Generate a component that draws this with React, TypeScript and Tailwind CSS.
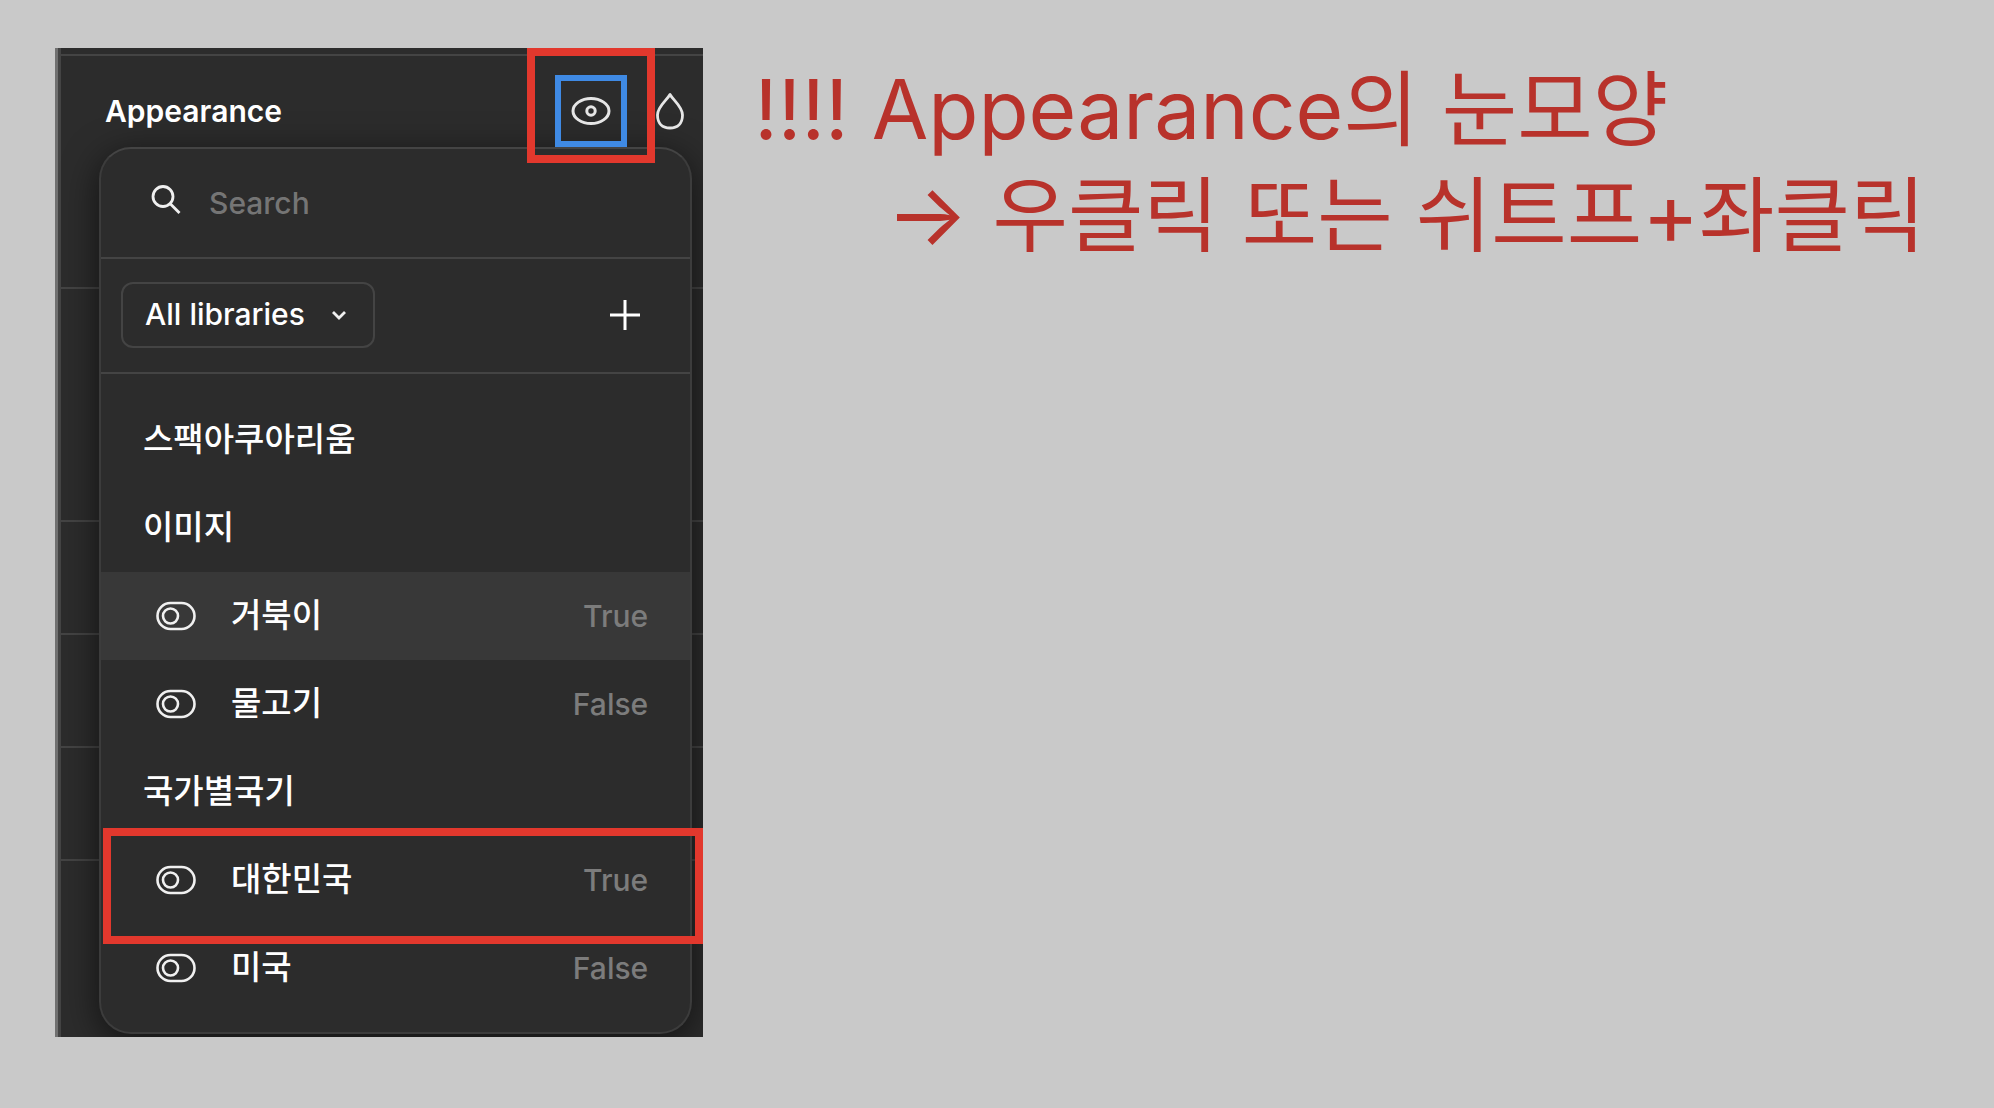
import React, { useState } from 'react';

interface Variable {
    id: number;
    name: string;
    value: string;
    marked?: boolean;
}

interface VariableGroup {
    title: string;
    variables: Variable[];
}

const groups: VariableGroup[] = [
    { title: '스팩아쿠아리움', variables: [] },
    {
        title: '이미지',
        variables: [
            { id: 1, name: '거북이', value: 'True' },
            { id: 2, name: '물고기', value: 'False' },
        ],
    },
    {
        title: '국가별국기',
        variables: [
            { id: 3, name: '대한민국', value: 'True', marked: true },
            { id: 4, name: '미국', value: 'False' },
        ],
    },
];

const EyeIcon = () => (
    <svg viewBox="0 0 40 30" className="w-10 h-[30px]" fill="none" stroke="#e6e6e6" strokeWidth="3" aria-hidden="true">
        <path d="M2 15C2 8 10.500 2.500 20 2.500S38 8 38 15S29.500 27.500 20 27.500S2 22 2 15Z" />
        <circle cx="20" cy="15" r="4.200" />
    </svg>
);

const DropIcon = () => (
    <svg viewBox="0 0 28 38" className="w-7 h-[38px]" fill="none" stroke="#e6e6e6" strokeWidth="2.800" strokeLinejoin="round" aria-hidden="true">
        <path d="M14 2.500C11 8 1.500 14.500 1.500 23C1.500 31.500 6.500 36 14 36S26.500 31.500 26.500 23C26.500 14.500 17 8 14 2.500Z" />
    </svg>
);

const SearchIcon = () => (
    <svg viewBox="0 0 30 30" className="w-[30px] h-[30px] mb-2" fill="none" stroke="#f0f0f0" strokeWidth="2.800" aria-hidden="true">
        <circle cx="12" cy="12.500" r="10" />
        <path d="M19 19.500L28.500 29" />
    </svg>
);

const ToggleIcon = () => (
    <svg viewBox="0 0 40 30" className="w-10 h-[30px]" fill="none" stroke="#f0f0f0" strokeWidth="2.600" aria-hidden="true">
        <rect x="1.500" y="2" width="37" height="26" rx="13" />
        <circle cx="14.500" cy="15" r="7.500" />
    </svg>
);

const VariableRow: React.FC<{ variable: Variable; active: boolean; onSelect: (id: number) => void }> = ({ variable, active, onSelect }) => {
    return (
        <li className="relative">
            <button
                onClick={() => onSelect(variable.id)}
                className={`flex h-[88px] w-full items-center pl-[55px] pr-[42px] text-left ${active ? 'bg-[#383838]' : ''}`}
            >
                <ToggleIcon />
                <span className="ml-[35px] text-[33px] text-white">{variable.name}</span>
                <span className="ml-auto text-[30px] text-[#7c7c7c]">{variable.value}</span>
            </button>
            {variable.marked && (
                <div className="pointer-events-none absolute -top-2 -bottom-5 left-0.5 -right-[13px] border-8 border-[#e2382d]" />
            )}
        </li>
    );
};

const VariablePicker = () => {
    const [selected, setSelected] = useState(1);
    const [query, setQuery] = useState('');

    return (
        <div className="mb-[3px] ml-[38px] mr-[11px] rounded-[32px] border-2 border-[#3c3c3c] border-t-[#444444] bg-[#2c2c2c] shadow-[0_8px_36px_rgba(0,0,0,0.6)]">
            <label className="flex h-[110px] items-center gap-7 border-b-2 border-[#444444] pl-[50px] pr-8">
                <SearchIcon />
                <input
                    type="text"
                    aria-label="Search"
                    placeholder="Search"
                    value={query}
                    onChange={(e) => setQuery(e.target.value)}
                    className="min-w-0 flex-1 bg-transparent text-[30px] text-white outline-none placeholder:text-[#757575]"
                />
            </label>
            <div className="flex h-[115px] items-center justify-between border-b-2 border-[#444444] pb-0.5 pl-5 pr-[50px]">
                <div className="relative">
                    <select
                        aria-label="Library"
                        className="h-[66px] appearance-none rounded-xl border-2 border-[#444444] bg-transparent pl-[22px] pr-[68px] text-[30px] text-white"
                    >
                        <option>All libraries</option>
                    </select>
                    <svg viewBox="0 0 16 10" className="pointer-events-none absolute right-7 top-7 w-4 h-2.5" fill="none" stroke="#f0f0f0" strokeWidth="2.800" aria-hidden="true">
                        <path d="M2 2L8 8L14 2" />
                    </svg>
                </div>
                <button aria-label="Create variable">
                    <svg viewBox="0 0 30 30" className="w-[30px] h-[30px]" stroke="#ffffff" strokeWidth="3" aria-hidden="true">
                        <path d="M15 0V30M0 15H30" />
                    </svg>
                </button>
            </div>
            <div className="pb-5 pt-[22px]">
                {groups.map(group => (
                    <section key={group.title}>
                        <h3 className="flex h-[88px] items-center pl-[42px] text-[33px] text-white">{group.title}</h3>
                        <ul>
                            {group.variables.map(variable => (
                                <VariableRow
                                    key={variable.id}
                                    variable={variable}
                                    active={variable.id === selected}
                                    onSelect={setSelected}
                                />
                            ))}
                        </ul>
                    </section>
                ))}
            </div>
        </div>
    );
};

const AppearancePanel = () => {
    return (
        <div className="grid overflow-hidden border-l-[3px] border-[#707070] bg-[#2c2c2c] font-medium">
            {/* section dividers behind the picker */}
            <div className="[grid-area:1/1] border-l-[3px] border-[#444444] pt-1.5">
                <div className="h-[233px] border-t-2 border-[#444444]" />
                <div className="h-[233px] border-t-2 border-[#444444]" />
                <div className="h-[113px] border-t-2 border-[#444444]" />
                <div className="h-[113px] border-t-2 border-[#444444]" />
                <div className="h-[113px] border-t-2 border-[#444444]" />
                <div className="border-t-2 border-[#444444]" />
            </div>
            <div className="[grid-area:1/1] min-w-0 pl-[3px] pt-[27px]">
                <div className="relative z-10 flex items-center pl-11 pr-[19px]">
                    <h2 className="text-[30px] font-semibold text-white">Appearance</h2>
                    <div className="relative ml-auto">
                        <button aria-label="Visibility" className="flex h-[72px] w-[72px] items-center justify-center border-[6px] border-[#3f8ae4]">
                            <EyeIcon />
                        </button>
                        <div className="pointer-events-none absolute -inset-x-7 -top-[27px] -bottom-4 border-8 border-[#e2382d]" />
                    </div>
                    <button aria-label="Blend mode" className="ml-[29px]">
                        <DropIcon />
                    </button>
                </div>
                <VariablePicker />
            </div>
        </div>
    );
};

const App = () => {
    return (
        <main className="grid min-h-screen grid-cols-[13fr_24fr] items-start gap-x-[51px] bg-[#c9c9c9] pb-16 pl-[55px] pr-[43px] pt-12 font-['Inter','Noto_Sans_CJK_KR',sans-serif]">
            <AppearancePanel />
            <div className="min-w-0 whitespace-nowrap pt-2.5 leading-[104px] text-[#b8322b]">
                <p className="text-[82px]">!!!! Appearance의 눈모양</p>
                <p className="pl-[132px] text-[86px]">
                    → <span className="text-[82px]">우클릭 또는 쉬트프</span>+<span className="text-[82px]">좌클릭</span>
                </p>
            </div>
        </main>
    );
};

export default App;
